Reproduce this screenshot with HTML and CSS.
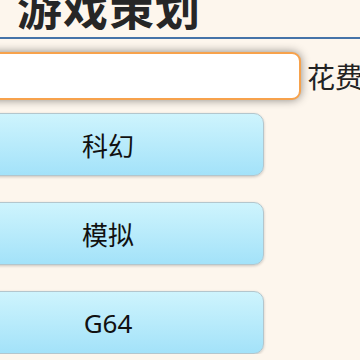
FILE: index.html
```html
<!DOCTYPE html>
<html lang="zh-CN">
<head>
	<meta charset="utf-8">
	<title>游戏策划</title>
	<link rel="stylesheet" href="styles.css">
</head>
<body>

	<header class="top">
		<h1 class="title">游戏策划</h1>
	</header>

	<section class="main">
		<div class="cost-row">
			<input type="text" class="cost-input">
			<span class="cost-label">花费</span>
		</div>

		<div class="genres">
			<button type="button" class="genre">科幻</button>
			<button type="button" class="genre">模拟</button>
			<button type="button" class="genre">G64</button>
		</div>
	</section>

</body>
</html>
```

FILE: styles.css
```css
body {
	margin: 0;
	background-color: #fdf6ed;
	font-family: "Noto Sans", "Noto Sans CJK SC", sans-serif;
	color: #1c1c1c;
	overflow: hidden;
}
.top {
	border-bottom: 2px solid #4573a8;
	margin-top: -14px;
	padding: 0 0 6px 17px;
}
.title {
	margin: 0;
	font-size: 45px;
	line-height: 45px;
	letter-spacing: 1px;
	font-weight: bold;
	color: #262626;
}
.main {
	margin-left: -48px;
	padding-top: 13px;
}
.cost-row {
	display: flex;
	align-items: center;
	gap: 6px;
	white-space: nowrap;
}
.cost-input {
	flex: none;
	width: 349px;
	height: 48px;
	box-sizing: border-box;
	border: 2px solid #f7a24c;
	border-radius: 9px;
	background-color: #fff;
	box-shadow: 0 0 10px rgba(0, 0, 0, 0.45);
	outline: none;
}
.cost-label {
	font-size: 28px;
	color: #222;
}
.genres {
	display: flex;
	flex-direction: column;
	gap: 26px;
	padding-top: 13px;
}
.genre {
	width: 312px;
	height: 63px;
	border: 1px solid #b3c6cd;
	border-radius: 10px;
	background: linear-gradient(#cef4fd, #a3e2f9);
	box-shadow: 0 1px 3px rgba(0, 0, 0, 0.2);
	font-family: "Noto Sans", "Noto Sans CJK SC", sans-serif;
	font-size: 26px;
	color: #111;
	padding: 0;
}
```
